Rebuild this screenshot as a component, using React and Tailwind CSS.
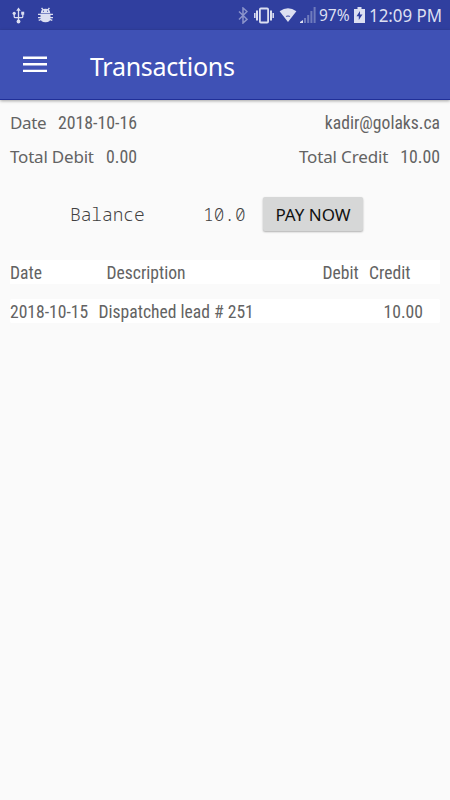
import clsx from "clsx";

const condensed = "font-['Roboto_Condensed','Roboto',sans-serif] font-normal [font-stretch:75%]";
const sans = "font-['Noto_Sans',sans-serif] font-normal";
const mono = "font-['Noto_Sans_Mono','DejaVu_Sans_Mono',monospace] font-light";

function StatusBar() {
  return (
    <div className="flex h-[30px] items-center bg-[#303f9f] text-[#dcdff1]">
      {/* notifications */}
      <svg className="ml-[12px] h-[17px] w-[13px]" viewBox="0 0 13 17" fill="none" stroke="currentColor" strokeWidth="1.3">
        <path d="M6.5 3v11M2.2 7v2.5q0 1.2 1.2 1.2h6.2q1.2 0 1.2-1.2V6" />
        <path d="M6.5 .5 8.8 3.8H4.2z" fill="currentColor" stroke="none" />
        <circle cx="2.2" cy="6.3" r="1.6" fill="currentColor" stroke="none" />
        <path d="M9.2 4.7h3v3h-3z" fill="currentColor" stroke="none" />
        <circle cx="6.5" cy="14.5" r="1.9" fill="currentColor" stroke="none" />
      </svg>
      <svg className="ml-[13px] h-[16px] w-[15px]" viewBox="0 0 15 16" fill="none" stroke="currentColor" strokeWidth="1.4">
        <path d="M2.8 5.9Q3 1.8 7.5 1.8T12.2 5.9z" fill="currentColor" stroke="none" />
        <path d="M2.5 6.7h10v4q0 4.6-5 4.6t-5-4.6z" fill="currentColor" stroke="none" />
        <path d="M3.6 .8l1.5 2M11.4.8 9.9 2.8M0 7.4h15M0 10.6h15" />
        <path d="M.7 13.4l2.6-1M14.3 13.4l-2.6-1" />
        <path d="M5 4.2h1M9 4.2h1" stroke="#303f9f" strokeWidth="1" />
      </svg>

      {/* system icons */}
      <svg className="ml-[185px] h-[17px] w-[10px] text-[#8b94cb]" viewBox="0 0 10 17" fill="none" stroke="currentColor" strokeWidth="1.5">
        <path d="M1 4.5l8 7.8L5 16V1l4 3.5-8 8" />
      </svg>
      <svg className="ml-[6px] h-[17px] w-[20px]" viewBox="0 0 20 17" fill="none" stroke="currentColor">
        <rect x="5.9" y="1.5" width="8.2" height="14" rx="1" strokeWidth="1.8" />
        <path d="M3 3.5v10M17 3.5v10" strokeWidth="2" />
        <path d="M.8 6v5M19.2 6v5" strokeWidth="1.5" />
      </svg>
      <svg className="ml-[5px] h-[14px] w-[18px]" viewBox="0 0 18 15">
        <path d="M0 3.4Q9-2.8 18 3.4L9 15z" fill="currentColor" />
        <path d="M6.6 8.7Q9 7.3 11.4 8.7L10.8 9.5Q9 8.6 7.2 9.5z" fill="#303f9f" />
      </svg>
      <svg className="ml-[3px] h-[16px] w-[16px]" viewBox="0 0 16 16" fill="#6f7bbd">
        <path d="M0 16v-1l3-2v3z" fill="currentColor" />
        <path d="M4 11h2v5H4zM7.2 8h2v8h-2zM10.4 4h2v12h-2zM13.6 0h2v16h-2z" />
      </svg>
      <span className={clsx(sans, "ml-[3px] w-[32px] origin-left scale-x-[.94] whitespace-nowrap text-[16.5px] leading-[30px]")}>97%</span>
      <svg className="ml-[3px] h-[16px] w-[11px]" viewBox="0 0 11 16">
        <path d="M3.5 0h4v2H11v14H0V2h3.5z" fill="currentColor" />
        <path d="M6 4 2.5 9.2h2.3V13l3.7-5.4H6z" fill="#303f9f" />
      </svg>
      <span className={clsx(sans, "ml-[4px] origin-left scale-x-[.96] whitespace-nowrap text-[17.6px] leading-[30px]")}>12:09 PM</span>
    </div>
  );
}

function AppBar() {
  return (
    <header className="flex h-[70px] items-center border-b border-[#202f98] bg-[#3f51b5] text-white shadow-[0_1px_3px_rgba(0,0,0,0.35)]">
      <svg className="ml-[23px] h-[17px] w-6" viewBox="0 0 24 17" fill="currentColor">
        <path d="M0 .5h24v2.4H0zM0 7.1h24v2.4H0zM0 13.7h24v2.4H0z" />
      </svg>
      <h1 className={clsx(sans, "ml-[43px] mt-[2px] whitespace-nowrap text-[25px] leading-8 tracking-[-0.28px]")}>Transactions</h1>
    </header>
  );
}

export default function App() {
  return (
    <div className="h-[800px] w-[450px] overflow-hidden bg-[#fafafa] text-[#636363]">
      <StatusBar />
      <AppBar />

      <main className="px-[10px] pt-[6px]">
        {/* summary */}
        <div className="flex h-[34px] items-center">
          <span className={clsx(sans, "w-12 text-[17px] tracking-[-0.4px]")}>Date</span>
          <span className={clsx(condensed, "text-[17.8px]")}>2018-10-16</span>
          <span className={clsx(condensed, "ml-auto text-[17.6px]")}>kadir@golaks.ca</span>
        </div>
        <div className="flex h-[34px] items-center whitespace-nowrap">
          <span className={clsx(sans, "w-24 text-[17px] tracking-[-0.2px]")}>Total Debit</span>
          <span className={clsx(condensed, "text-[17.8px]")}>0.00</span>
          <span className={clsx(sans, "ml-auto mr-3 text-[17px] tracking-[-0.15px]")}>Total Credit</span>
          <span className={clsx(condensed, "text-[17.8px]")}>10.00</span>
        </div>

        {/* balance */}
        <div className="mt-[23px] flex h-[34px] items-center text-[#404040]">
          <span className={clsx(mono, "ml-[60px] w-[133px] text-[17.8px]")}>Balance</span>
          <span className={clsx(mono, "w-[60px] text-[17.8px]")}>10.0</span>
          <button className={clsx(sans, "h-[34px] w-[100px] rounded-[2px] bg-[#d6d7d7] pt-px text-[17px] whitespace-nowrap text-[#111] shadow-[0_1px_2px_rgba(0,0,0,0.3)]")}>
            PAY NOW
          </button>
        </div>

        {/* transactions */}
        <div className={clsx(condensed, "mt-[29px] flex h-6 items-center bg-white pt-[2px] text-[17.6px]")}>
          <span className="w-[96.5px]">Date</span>
          <span className="w-[216px]">Description</span>
          <span className="w-[46.5px]">Debit</span>
          <span>Credit</span>
        </div>
        <div className={clsx(condensed, "mt-[15px] flex h-6 items-center whitespace-nowrap rounded-[2px] bg-white pt-[2px] pr-[17px] text-[17.6px]")}>
          <span className="w-[88.5px]">2018-10-15</span>
          <span>Dispatched lead # 251</span>
          <span className="ml-auto">10.00</span>
        </div>
      </main>
    </div>
  );
}
